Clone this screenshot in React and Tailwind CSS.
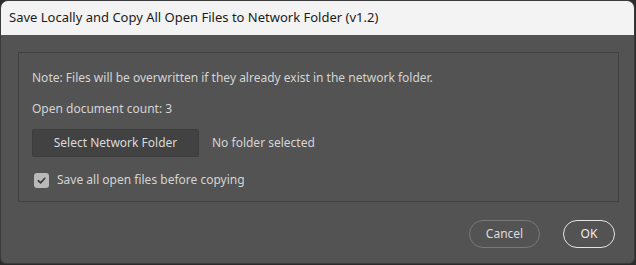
import React from 'react';

const font = { fontFamily: '"Noto Sans", "Open Sans", sans-serif' };

const App = () => {
    return (
        <div className="w-[636px] h-[265px] bg-[#2c2c2c] overflow-hidden" style={font}>
            <div className="w-[635px] h-[264px] rounded-t-[8px] rounded-b-[6px] border border-[#3b3b3b] bg-[#535353] overflow-hidden flex flex-col">
                {/* Title bar */}
                <div className="h-[34px] shrink-0 bg-[#f3f3f3] flex items-center pl-[8px] text-[13px] text-[#1b1b1b]">
                    Save Locally and Copy All Open Files to Network Folder (v1.2)
                </div>

                <div className="pl-[17px] pt-[17px] pr-[15px]">
                    {/* Panel */}
                    <div className="h-[150px] border border-[#404040] pl-[13px] text-[12px] text-[#d4d4d4]">
                        <div className="mt-[16px] h-[18px] leading-[18px]">
                            Note: Files will be overwritten if they already exist in the network folder.
                        </div>
                        <div className="mt-[13px] h-[18px] leading-[18px]">Open document count: 3</div>
                        <div className="mt-[11px] flex items-center gap-[13px]">
                            <button className="w-[167px] h-[28px] bg-[#424242] border border-[#3d3d3d] rounded-[2px] text-[#dadada] text-[12px]">
                                Select Network Folder
                            </button>
                            <span>No folder selected</span>
                        </div>
                        <div className="mt-[14px] flex items-center gap-[8px] pl-[2px]">
                            <span className="w-[15px] h-[15px] rounded-[3px] bg-[#b9b9b9] flex items-center justify-center">
                                <svg width="11" height="11" viewBox="0 0 12 12" fill="none">
                                    <path d="M2.5 6.2 L5 8.6 L9.6 3.6" stroke="#3a3a3a" strokeWidth="1.8" strokeLinecap="round" strokeLinejoin="round" />
                                </svg>
                            </span>
                            <span>Save all open files before copying</span>
                        </div>
                    </div>
                </div>

                {/* Footer */}
                <div className="flex justify-end gap-[23px] pr-[19px] mt-[18px]">
                    <button className="w-[71px] h-[28px] rounded-full border border-[#787878] text-[12px] text-[#dcdcdc]">
                        Cancel
                    </button>
                    <button className="w-[52px] h-[28px] rounded-full border border-[#e4e4e4] text-[12px] text-[#eeeeee]">
                        OK
                    </button>
                </div>
            </div>
        </div>
    );
};

export default App;
